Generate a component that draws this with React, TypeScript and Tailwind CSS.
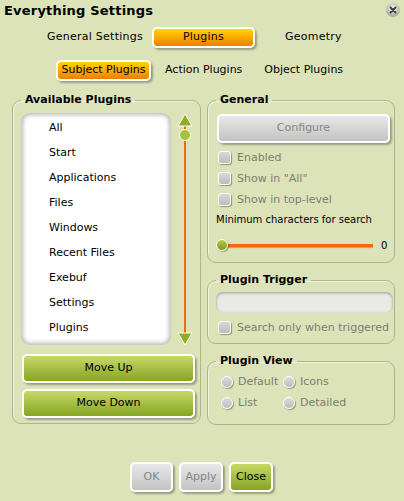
import React from "react";

const FONT = { fontFamily: '"DejaVu Sans", Verdana, sans-serif' };

function Checkbox({ label }: { label: string }) {
  return (
    <div className="flex items-center h-[21px] pl-[2px]">
      <div className="w-[13px] h-[13px] rounded-[3px] border-[1.5px] border-white bg-gradient-to-b from-[#d8d8d8] to-[#bdbdbd] shadow-[1px_1px_1px_rgba(0,0,0,0.35)]" />
      <span className="ml-[6px] text-[11px] text-[#7d7d70] leading-none">{label}</span>
    </div>
  );
}

function Radio({ label, w }: { label: string; w: string }) {
  return (
    <div className={`flex items-center ${w}`}>
      <div className="w-[12px] h-[12px] rounded-full border-[1.5px] border-white bg-gradient-to-b from-[#dcdcdc] to-[#bdbdbd] shadow-[1px_1px_1px_rgba(0,0,0,0.35)]" />
      <span className="ml-[5px] text-[11px] text-[#7d7d70] leading-none">{label}</span>
    </div>
  );
}

function GreenButton({ label, className = "" }: { label: string; className?: string }) {
  return (
    <div
      className={`flex items-center justify-center rounded-[5px] border-2 border-white bg-gradient-to-b from-[#c7d965] to-[#87a51f] shadow-[2px_2px_2px_rgba(0,0,0,0.3)] text-[11px] text-black ${className}`}
    >
      {label}
    </div>
  );
}

function GreyButton({ label, className = "" }: { label: string; className?: string }) {
  return (
    <div
      className={`flex items-center justify-center rounded-[5px] border-2 border-white bg-gradient-to-b from-[#e8e8e8] to-[#c3c3c3] shadow-[2px_2px_2px_rgba(0,0,0,0.3)] text-[11px] text-[#858585] ${className}`}
    >
      {label}
    </div>
  );
}

function Pill({ label, className = "" }: { label: string; className?: string }) {
  return (
    <div
      className={`flex items-center justify-center rounded-[5px] border-2 border-white bg-gradient-to-b from-[#ffd400] to-[#ee7d00] shadow-[2px_2px_2px_rgba(0,0,0,0.3)] text-[11px] text-black ${className}`}
    >
      {label}
    </div>
  );
}

function Group({
  title,
  className = "",
  children,
}: {
  title: string;
  className?: string;
  children: React.ReactNode;
}) {
  return (
    <fieldset
      className={`min-w-0 rounded-[9px] border border-[#adb58e] shadow-[inset_1px_1px_0_#eef2d8] pl-[8px] ${className}`}
    >
      <legend className="px-[4px] text-[11px] font-bold leading-[14px] text-black">{title}</legend>
      {children}
    </fieldset>
  );
}

const items = [
  "All",
  "Start",
  "Applications",
  "Files",
  "Windows",
  "Recent Files",
  "Exebuf",
  "Settings",
  "Plugins",
];

export default function App() {
  return (
    <div className="w-[404px] h-[501px] bg-[#dce3b9] relative overflow-hidden" style={FONT}>
      {/* title bar */}
      <div className="flex items-start justify-between h-[20px]">
        <div className="pl-[4px] pt-[2px] text-[13px] font-bold leading-[17px] text-black tracking-[0.2px]">
          Everything Settings
        </div>
        <svg width="16" height="16" viewBox="0 0 16 16" className="mt-[2px] mr-[3px]">
          <defs>
            <radialGradient id="cg" cx="50%" cy="35%" r="60%">
              <stop offset="0%" stopColor="#f4f4f4" />
              <stop offset="100%" stopColor="#a9ab9c" />
            </radialGradient>
          </defs>
          <circle cx="8" cy="8" r="7" fill="url(#cg)" />
          <path d="M5.5 5.5 L10.5 10.5 M10.5 5.5 L5.5 10.5" stroke="#3a3a3a" strokeWidth="1.8" strokeLinecap="round" />
        </svg>
      </div>

      {/* main tabs */}
      <div className="flex items-center h-[20px] mt-[7px] text-[11px] text-black tracking-[0.25px]">
        <span className="ml-[47px]">General Settings</span>
        <Pill label="Plugins" className="ml-[9px] w-[103px] h-[21px]" />
        <span className="ml-[30px]">Geometry</span>
      </div>

      {/* sub tabs */}
      <div className="flex items-center h-[20px] mt-[13px] text-[11px] text-black">
        <Pill label="Subject Plugins" className="ml-[56px] w-[95px] h-[21px]" />
        <span className="ml-[14px]">Action Plugins</span>
        <span className="ml-[22px]">Object Plugins</span>
      </div>

      {/* content */}
      <div className="flex mt-[13px] ml-[12px] gap-[6px]">
        {/* left */}
        <Group title="Available Plugins" className="w-[189px] h-[331px] pr-[5px]">
          <div className="flex mt-[6px]">
            <div className="w-[150px] h-[232px] bg-white rounded-[9px] shadow-[inset_0_0_4px_2px_rgba(0,0,0,0.28)] pt-[3px]">
              {items.map((it) => (
                <div key={it} className="h-[25px] flex items-center pl-[28px] text-[11px] text-black">
                  {it}
                </div>
              ))}
            </div>
            <svg width="16" height="232" viewBox="0 0 16 232" className="ml-[6px]">
              <line x1="8" y1="12" x2="8" y2="222" stroke="#f26a10" strokeWidth="2" />
              <polygon points="8,1 15,13 1,13" fill="#8eae25" stroke="#ffffff" strokeWidth="1" />
              <polygon points="8,232 15,220 1,220" fill="#8eae25" stroke="#ffffff" strokeWidth="1" />
              <circle cx="8" cy="22" r="5.5" fill="#a5c23a" stroke="#ffffff" strokeWidth="1" />
            </svg>
          </div>
          <GreenButton label="Move Up" className="mt-[9px] ml-[1px] w-[173px] h-[29px]" />
          <GreenButton label="Move Down" className="mt-[6px] ml-[1px] w-[173px] h-[29px]" />
        </Group>

        {/* right */}
        <div className="flex flex-col w-[188px]">
          <Group title="General" className="h-[170px] pr-[2px]">
            <GreyButton label="Configure" className="mt-[7px] ml-[1px] w-[173px] h-[29px] text-[11.5px]" />
            <div className="mt-[4px]">
              <Checkbox label="Enabled" />
              <Checkbox label='Show in "All"' />
              <Checkbox label="Show in top-level" />
            </div>
            <div className="text-[10px] text-black mt-[3px] leading-[14px]">
              Minimum characters for search
            </div>
            <div className="flex items-center h-[14px] mt-[11px]">
              <div className="relative flex items-center w-[157px] h-[14px]">
                <div className="ml-[9px] w-[148px] h-[3px] bg-[#f26a10] shadow-[0_1px_1px_rgba(0,0,0,0.25)]" />
                <div className="absolute left-0 top-[1px] w-[12px] h-[12px] rounded-full border border-white bg-gradient-to-b from-[#b7cc4a] to-[#7f9a1c] shadow-[1px_1px_1px_rgba(0,0,0,0.3)]" />
              </div>
              <span className="ml-[8px] text-[10px] text-black">0</span>
            </div>
          </Group>

          <Group title="Plugin Trigger" className="h-[71px] mt-[10px] pr-[2px]">
            <div className="mt-[5px] w-[177px] h-[21px] rounded-[7px] bg-[#e9e9e6] shadow-[inset_0_1px_3px_rgba(0,0,0,0.35)]" />
            <div className="mt-[4px]">
              <Checkbox label="Search only when triggered" />
            </div>
          </Group>

          <Group title="Plugin View" className="h-[71px] mt-[10px] pr-[2px]">
            <div className="flex items-center h-[21px] mt-[3px] pl-[5px]">
              <Radio label="Default" w="w-[62px]" />
              <Radio label="Icons" w="" />
            </div>
            <div className="flex items-center h-[21px] pl-[5px]">
              <Radio label="List" w="w-[62px]" />
              <Radio label="Detailed" w="" />
            </div>
          </Group>
        </div>
      </div>

      {/* footer buttons */}
      <div className="flex mt-[37px] ml-[130px] gap-[6px]">
        <GreyButton label="OK" className="w-[43px] h-[30px] text-[11.5px]" />
        <GreyButton label="Apply" className="w-[44px] h-[30px] text-[11.5px] text-[#6d6d6d]" />
        <GreenButton label="Close" className="w-[44px] h-[30px] text-[11.5px]" />
      </div>
    </div>
  );
}
